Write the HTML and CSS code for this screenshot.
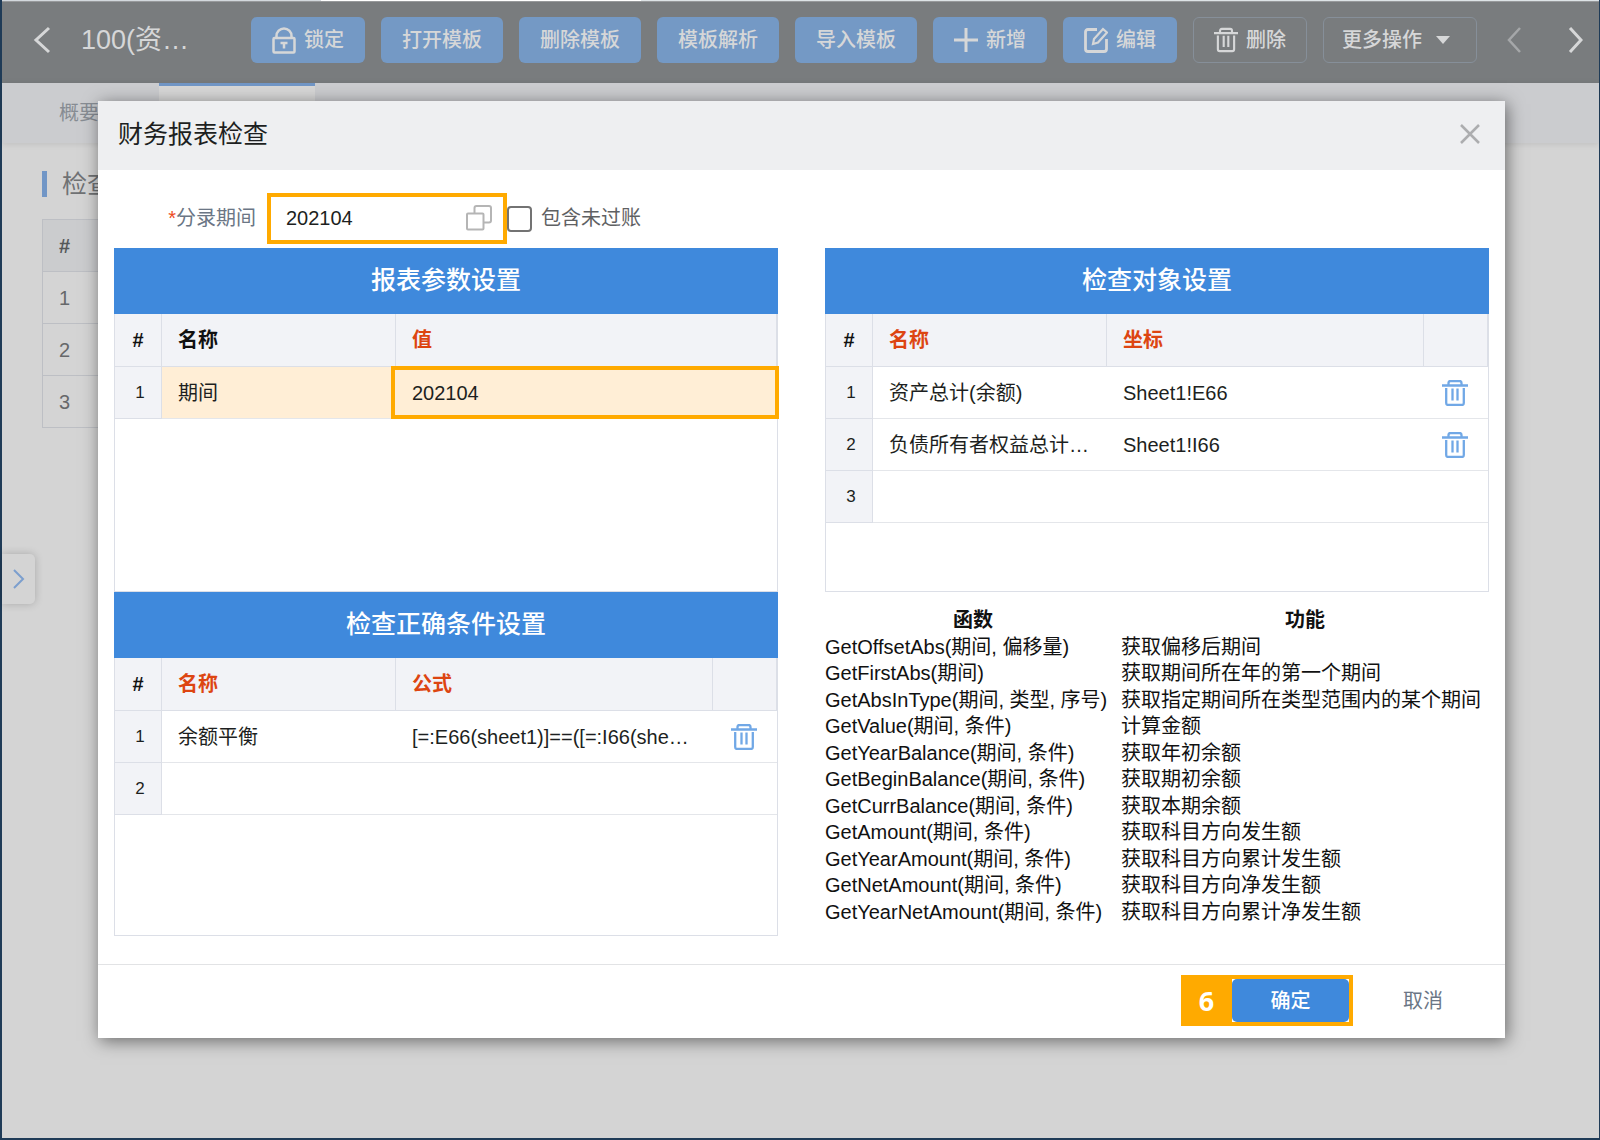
FILE: index.html
```html
<!DOCTYPE html>
<html lang="zh-CN">

<head>
    <meta charset="utf-8">
    <meta name="viewport" content="width=device-width, initial-scale=1">
    <title>财务报表检查</title>
    <link rel="stylesheet" href="styles.css">
</head>

<body>
    <svg class="symbols" width="0" height="0">
        <symbol id="trash" viewBox="0 0 26 26">
            <path d="M0 5.500h26M6.500 5V3q0-2 2-2h9q2 0 2 2v2M4.200 8v15q0 2 2 2h13.600q2 0 2-2V8M10.500 8.500v12M15.500 8.500v12" fill="none" stroke="currentColor" stroke-width="2.300" />
        </symbol>
    </svg>

    <div class="page">
        <div class="topLine"></div>
        <header class="toolbar">
            <button class="iconButton back" aria-label="返回">
                <svg width="18" height="28" viewBox="0 0 18 28"><path d="M16 2L3 14l13 12" fill="none" stroke="currentColor" stroke-width="3" /></svg>
            </button>
            <h1>100(资…</h1>
            <div class="actions">
                <button class="btn">
                    <svg width="24" height="27" viewBox="0 0 24 27"><g fill="none" stroke="currentColor" stroke-width="2.500"><rect x="1.500" y="11" width="21" height="14.500" rx="1" /><path d="M4.500 11V9a7.500 7.500 0 0 1 15 0v2M8.500 16h7M12 15.500v6" /></g></svg>
                    锁定
                </button>
                <button class="btn">打开模板</button>
                <button class="btn">删除模板</button>
                <button class="btn">模板解析</button>
                <button class="btn">导入模板</button>
                <button class="btn">
                    <svg width="24" height="24" viewBox="0 0 24 24"><path d="M0 12h24M12 0v24" fill="none" stroke="currentColor" stroke-width="3" /></svg>
                    新增
                </button>
                <button class="btn">
                    <svg width="24" height="26" viewBox="0 0 24 26"><g fill="none" stroke="currentColor" stroke-width="2.800"><path d="M13 2.500H4q-2.500 0-2.500 2.500v17q0 2.500 2.500 2.500h16q2.500 0 2.500-2.500V12" /><path d="M9 17l1-5 9-10 4 3.500-9 10z" stroke-width="2.200" /></g></svg>
                    编辑
                </button>
                <button class="btn plain">
                    <svg width="24" height="26"><use href="#trash" /></svg>
                    删除
                </button>
                <button class="btn plain more">更多操作
                    <svg width="14" height="8" viewBox="0 0 14 8"><path d="M0 0h14L7 8z" fill="currentColor" /></svg>
                </button>
            </div>
            <nav class="pager">
                <button class="iconButton faded" aria-label="上一条">
                    <svg width="15" height="26" viewBox="0 0 15 26"><path d="M13 1L2 13l11 12" fill="none" stroke="currentColor" stroke-width="2.500" /></svg>
                </button>
                <button class="iconButton" aria-label="下一条">
                    <svg width="15" height="26" viewBox="0 0 15 26"><path d="M2 1l11 12L2 25" fill="none" stroke="currentColor" stroke-width="3" /></svg>
                </button>
            </nav>
        </header>
        <nav class="tabs">
            <a href="#">概要</a>
            <a href="#" class="active"></a>
        </nav>
        <main>
            <h2>检查</h2>
            <table class="backTable">
                <tr><th>#</th></tr>
                <tr><td>1</td></tr>
                <tr><td>2</td></tr>
                <tr><td>3</td></tr>
            </table>
        </main>
        <button class="handle" aria-label="展开">
            <svg width="12" height="20" viewBox="0 0 12 20"><path d="M1 1l9 9-9 9" fill="none" stroke="currentColor" stroke-width="2" /></svg>
        </button>
    </div>

    <div class="modal" role="dialog" aria-labelledby="modalTitle">
        <div class="modalHead">
            <h2 id="modalTitle">财务报表检查</h2>
            <button class="close" aria-label="关闭">
                <svg width="20" height="20" viewBox="0 0 20 20"><path d="M1 1l18 18M19 1L1 19" fill="none" stroke="currentColor" stroke-width="2.500" /></svg>
            </button>
        </div>
        <div class="modalBody">
            <form class="filters">
                <label class="periodLabel" for="period"><span class="required">*</span>分录期间</label>
                <div class="periodBox">
                    <input type="text" id="period" value="202104">
                    <svg width="26" height="26" viewBox="0 0 26 26"><g fill="none" stroke="currentColor" stroke-width="2"><path d="M8.500 8V3q0-2 2-2H23q2 0 2 2v12.500q0 2-2 2h-5" /><rect x="1" y="8.500" width="16.500" height="16" rx="1" /></g></svg>
                </div>
                <input type="checkbox" id="unposted">
                <label class="unpostedLabel" for="unposted">包含未过账</label>
            </form>
            <div class="columns">
                <div>
                    <section class="panel">
                        <h3>报表参数设置</h3>
                        <table class="grid">
                            <colgroup><col class="colNo"><col class="colName"><col></colgroup>
                            <tr><th>#</th><th>名称</th><th class="must">值</th></tr>
                            <tr class="selected"><td>1</td><td>期间</td><td class="marked">202104</td></tr>
                        </table>
                    </section>
                    <section class="panel">
                        <h3>检查正确条件设置</h3>
                        <table class="grid">
                            <colgroup><col class="colNo"><col class="colName"><col><col class="colDel"></colgroup>
                            <tr><th>#</th><th class="must">名称</th><th class="must">公式</th><th></th></tr>
                            <tr>
                                <td>1</td><td>余额平衡</td><td>[=:E66(sheet1)]==([=:I66(she…</td>
                                <td><button class="del" aria-label="删除"><svg width="26" height="26"><use href="#trash" /></svg></button></td>
                            </tr>
                            <tr><td>2</td><td></td><td></td><td></td></tr>
                        </table>
                    </section>
                </div>
                <div>
                    <section class="panel">
                        <h3>检查对象设置</h3>
                        <table class="grid">
                            <colgroup><col class="colNo"><col class="colName"><col><col class="colDel"></colgroup>
                            <tr><th>#</th><th class="must">名称</th><th class="must">坐标</th><th></th></tr>
                            <tr>
                                <td>1</td><td>资产总计(余额)</td><td>Sheet1!E66</td>
                                <td><button class="del" aria-label="删除"><svg width="26" height="26"><use href="#trash" /></svg></button></td>
                            </tr>
                            <tr>
                                <td>2</td><td>负债所有者权益总计…</td><td>Sheet1!I66</td>
                                <td><button class="del" aria-label="删除"><svg width="26" height="26"><use href="#trash" /></svg></button></td>
                            </tr>
                            <tr><td>3</td><td></td><td></td><td></td></tr>
                        </table>
                    </section>
                    <table class="functions">
                        <tr><th>函数</th><th>功能</th></tr>
                        <tr><td>GetOffsetAbs(期间, 偏移量)</td><td>获取偏移后期间</td></tr>
                        <tr><td>GetFirstAbs(期间)</td><td>获取期间所在年的第一个期间</td></tr>
                        <tr><td>GetAbsInType(期间, 类型, 序号)</td><td>获取指定期间所在类型范围内的某个期间</td></tr>
                        <tr><td>GetValue(期间, 条件)</td><td>计算金额</td></tr>
                        <tr><td>GetYearBalance(期间, 条件)</td><td>获取年初余额</td></tr>
                        <tr><td>GetBeginBalance(期间, 条件)</td><td>获取期初余额</td></tr>
                        <tr><td>GetCurrBalance(期间, 条件)</td><td>获取本期余额</td></tr>
                        <tr><td>GetAmount(期间, 条件)</td><td>获取科目方向发生额</td></tr>
                        <tr><td>GetYearAmount(期间, 条件)</td><td>获取科目方向累计发生额</td></tr>
                        <tr><td>GetNetAmount(期间, 条件)</td><td>获取科目方向净发生额</td></tr>
                        <tr><td>GetYearNetAmount(期间, 条件)</td><td>获取科目方向累计净发生额</td></tr>
                    </table>
                </div>
            </div>
        </div>
        <div class="modalFoot">
            <div class="step">
                <span>6</span>
                <button class="ok">确定</button>
            </div>
            <button class="cancel">取消</button>
        </div>
    </div>
</body>

</html>
```
FILE: styles.css
```css
* {
    box-sizing: border-box;
}

body {
    margin: 0;
    position: relative;
    font-family: "Liberation Sans", "Noto Sans CJK SC", sans-serif;
    font-size: 20px;
    line-height: 24px;
    color: #1d1f21;
}

h1,
h2,
h3 {
    margin: 0;
    font-weight: normal;
}

button {
    font: inherit;
    border: none;
    background: none;
    padding: 0;
    cursor: pointer;
}

svg {
    display: block;
    flex: none;
}

.symbols {
    position: absolute;
}

/* page behind the dialog */
.page {
    position: relative;
    min-height: 100vh;
    background: #d4d4d4;
    border: solid #1f3b57;
    border-width: 0 1px 2px 2px;
}

.topLine {
    height: 2px;
    background: linear-gradient(to right, #d3d8dd 20%, #ffffff 20%, #ffffff 40%, #dde3e6 40%);
    border-bottom: 1px solid #97999b;
}

.toolbar {
    display: flex;
    align-items: center;
    height: 81px;
    padding: 0 16px 5px 31px;
    background: #797c7e;
    color: #d6d7d8;
}

.toolbar h1 {
    width: 171px;
    padding-left: 30px;
    font-size: 27px;
    line-height: 36px;
    white-space: nowrap;
}

.iconButton {
    color: #d6d7d8;
}

.iconButton.faded {
    color: #a5a7a9;
}

.actions {
    display: flex;
    gap: 16px;
    margin-left: 29px;
}

.btn {
    display: flex;
    align-items: center;
    gap: 8px;
    height: 46px;
    padding: 0 21px;
    border-radius: 6px;
    background: #7499c5;
    color: #d6d7d8;
    font-weight: 500;
    white-space: nowrap;
}

.btn.plain {
    padding: 0 20px;
    background: none;
    border: 1px solid #868f99;
}

.btn.more {
    gap: 14px;
    padding: 0 26px 0 18px;
}

.pager {
    display: flex;
    gap: 46px;
    margin-left: auto;
}

.tabs {
    display: flex;
    height: 60px;
    padding-left: 57px;
    background: #cbcccf;
    box-shadow: 0 1px 6px rgba(0, 0, 0, 0.1);
}

.tabs a {
    width: 100px;
    padding-top: 18px;
    color: #878c93;
    text-decoration: none;
}

.tabs a.active {
    width: 156px;
    background: #d7d7d7;
    border-top: 3px solid #7196c6;
}

main {
    padding: 28px 40px;
}

main h2 {
    margin-bottom: 22px;
    font-size: 25px;
    line-height: 26px;
    padding-left: 15px;
    border-left: 5px solid #7196c6;
    color: #707274;
}

.backTable {
    width: 50%;
    border-collapse: collapse;
}

.backTable th,
.backTable td {
    height: 52px;
    padding: 0 16px;
    border: 1px solid #bdbfc4;
    text-align: left;
    color: #66686a;
}

.backTable th {
    background: #cbccce;
    color: #55585a;
}

.handle {
    position: absolute;
    left: 0;
    top: 554px;
    width: 33px;
    height: 50px;
    padding-left: 11px;
    border-radius: 0 5px 5px 0;
    background: #d4d4d4;
    box-shadow: 0 0 8px rgba(0, 0, 0, 0.2);
    color: #7c9fce;
}

/* dialog */
.modal {
    position: absolute;
    top: 101px;
    left: 98px;
    right: 95px;
    background: #ffffff;
    box-shadow: 2px 3px 16px rgba(0, 0, 0, 0.5);
}

.modalHead {
    display: flex;
    align-items: center;
    justify-content: space-between;
    height: 69px;
    padding: 0 25px 4px 20px;
    background: #eeeff1;
}

.modalHead h2 {
    font-size: 25px;
    line-height: 32px;
}

.close {
    color: #acadaf;
}

.modalBody {
    padding: 23px 16px 28px;
}

.filters {
    display: flex;
    align-items: center;
    margin-bottom: 4px;
}

.filters label {
    padding-bottom: 2px;
}

.periodLabel {
    width: 142px;
    margin-right: 11px;
    text-align: right;
    color: #6b7685;
}

.required {
    color: #ee4b22;
}

.periodBox {
    display: flex;
    align-items: center;
    width: 240px;
    height: 51px;
    padding: 0 11px 2px 0;
    border: 4px solid #ffaa00;
    color: #b5b5b5;
}

.periodBox input {
    flex: 1;
    min-width: 0;
    padding: 0 0 0 15px;
    border: none;
    outline: none;
    font: inherit;
    color: #1d1f21;
}

#unposted {
    appearance: none;
    width: 25px;
    height: 26px;
    margin: 0;
    border: 2px solid #737373;
    border-radius: 4px;
    background: #ffffff;
}

.unpostedLabel {
    margin-left: 9px;
    color: #5f6163;
}

.columns {
    display: grid;
    grid-template-columns: 1fr 1fr;
    gap: 47px;
}

.panel {
    min-height: 344px;
    border: 1px solid #dcdfe7;
    border-top: none;
}

.panel h3 {
    margin: 0 -1px;
    background: #3f89dc;
    color: #ffffff;
    font-size: 25px;
    font-weight: 500;
    line-height: 64px;
    height: 66px;
    text-align: center;
}

.grid {
    width: 100%;
    table-layout: fixed;
    border-spacing: 0;
}

.colNo {
    width: 47px;
}

.colName {
    width: 234px;
}

.colDel {
    width: 64px;
}

.grid th,
.grid td {
    height: 52px;
    padding: 0 0 0 16px;
    border-bottom: 1px solid #e4e6ea;
    text-align: left;
    white-space: nowrap;
}

.grid th {
    height: 53px;
    background: #f2f3f7;
    border-right: 1px solid #dcdfe7;
    border-bottom-color: #dcdfe7;
    color: #111111;
}

.grid th.must {
    color: #dd4511;
}

.grid th:first-child,
.grid td:first-child {
    padding: 0;
    text-align: center;
}

.grid td:first-child {
    padding-left: 4px;
    font-size: 17px;
    background: #f2f3f7;
    border-right: 1px solid #dcdfe7;
    border-bottom-color: #dcdfe7;
}

.grid .selected td:not(:first-child) {
    background: #ffeed6;
}

.grid .marked {
    position: relative;
}

/* frame drawn over the cell edges */
.marked::after {
    content: "";
    position: absolute;
    inset: -1px -2px -1px -5px;
    border: 4px solid #ffaa00;
}

.del {
    display: block;
    margin-left: 2px;
    color: #71a8e6;
}

.functions {
    width: 100%;
    height: 318px;
    margin-top: 15px;
    border-spacing: 0;
    line-height: 24px;
    color: #111111;
}

.functions th,
.functions td {
    padding: 0;
    white-space: nowrap;
}

.functions th:first-child {
    width: 296px;
}

.modalFoot {
    display: flex;
    align-items: center;
    justify-content: flex-end;
    height: 74px;
    padding: 0 12px 2px 0;
    border-top: 1px solid #e2e3e5;
}

.step {
    display: flex;
    align-items: center;
    border: 4px solid #ffaa00;
}

.step span {
    width: 47px;
    padding-right: 4px;
    background: #ffaa00;
    color: #ffffff;
    font: bold 27px/43px "Noto Sans", sans-serif;
    text-align: center;
}

.ok {
    width: 117px;
    height: 43px;
    border-radius: 5px;
    background: #3f89dc;
    color: #ffffff;
    font-weight: 500;
}

.cancel {
    padding: 0 50px;
    color: #6b7685;
}
```
